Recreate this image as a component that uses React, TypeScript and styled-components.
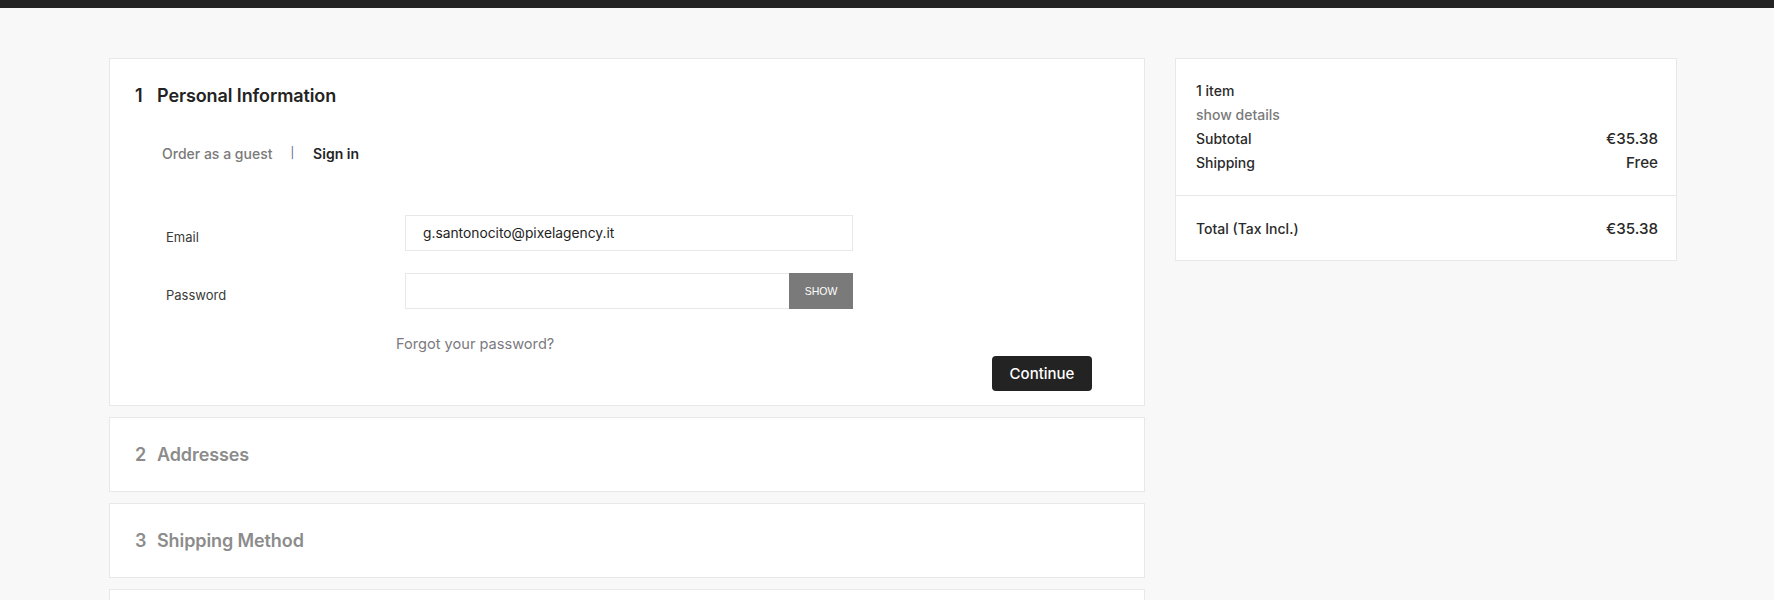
import React from "react";
import styled, { createGlobalStyle } from "styled-components";

const GlobalStyle = createGlobalStyle`
  * { box-sizing: border-box; }
  html, body { margin: 0; padding: 0; }
  body {
    background: #f8f8f8;
    font-family: "Inter", "Noto Sans", "Liberation Sans", sans-serif;
    color: #232323;
  }
`;

const Page = styled.div`
  min-height: 600px;
  background: #f8f8f8;
`;

const TopBar = styled.div`
  height: 8px;
  background: #232323;
`;

const Layout = styled.div`
  display: flex;
  align-items: flex-start;
  gap: 30px;
  padding: 50px 0 0 109px;
`;

const MainColumn = styled.div`
  width: 1036px;
  display: flex;
  flex-direction: column;
  gap: 11px;
`;

const StepCard = styled.section`
  background: #fff;
  border: 1px solid #e8e8e8;
  min-height: 75px;
`;

const StepHeader = styled.h2<{ $active?: boolean }>`
  margin: 0;
  height: 73px;
  padding: 0 25px;
  display: flex;
  align-items: center;
  font-size: 18px;
  font-weight: 600;
  letter-spacing: -0.1px;
  color: ${(p) => (p.$active ? "#232323" : "#8c8c8c")};
`;

const StepNumber = styled.span`
  display: inline-block;
  width: 22px;
`;

const StepBody = styled.div`
  padding: 0 52px 14px 52px;
`;

const Tabs = styled.div`
  display: flex;
  align-items: center;
  height: 24px;
  margin-top: 9px;
  font-size: 14px;
  font-weight: 500;
`;

const Tab = styled.span<{ $active?: boolean }>`
  color: ${(p) => (p.$active ? "#232323" : "#7a7a7a")};
  font-weight: ${(p) => (p.$active ? 600 : 500)};
`;

const TabSep = styled.span`
  color: #5a6090;
  font-size: 11px;
  font-weight: 400;
  margin: 0 19px 0 18px;
`;

const FormGrid = styled.div`
  display: grid;
  grid-template-columns: 239px 448px;
  row-gap: 22px;
  align-items: center;
  margin-top: 50px;
  padding-left: 4px;
`;

const Label = styled.label`
  font-size: 13px;
  color: #3a3a3a;
  padding-top: 8px;
`;

const Input = styled.div`
  height: 36px;
  border: 1px solid #e8e8e8;
  background: #fff;
  display: flex;
  align-items: center;
  padding-left: 17px;
  font-size: 13.8px;
  color: #232323;
`;

const PasswordGroup = styled.div`
  display: flex;
  height: 36px;
`;

const PasswordInput = styled.div`
  flex: 1;
  border: 1px solid #e8e8e8;
  border-right: none;
`;

const ShowButton = styled.button`
  width: 64px;
  border: none;
  background: #7a7a7a;
  color: #fff;
  font-family: "Liberation Sans", Arial, sans-serif;
  font-size: 10.5px;
  text-transform: uppercase;
  padding: 0;
`;

const ForgotRow = styled.div`
  margin-top: 23px;
  padding-left: 234px;
  height: 24px;
  display: flex;
  align-items: center;
`;

const ForgotLink = styled.a`
  font-size: 14.6px;
  color: #7a7a80;
  text-decoration: none;
`;

const ActionRow = styled.div`
  display: flex;
  justify-content: flex-end;
`;

const ContinueButton = styled.button`
  width: 100px;
  height: 35px;
  border: none;
  border-radius: 4px;
  background: #232323;
  color: #fff;
  font-family: "Inter", sans-serif;
  font-size: 15px;
  font-weight: 500;
`;

const Summary = styled.aside`
  width: 502px;
  background: #fff;
  border: 1px solid #e8e8e8;
`;

const SummarySection = styled.div<{ $divider?: boolean }>`
  padding: ${(p) => (p.$divider ? "20px 18px 20px 20px" : "19px 18px 21px 20px")};
  border-top: ${(p) => (p.$divider ? "1px solid #e8e8e8" : "none")};
`;

const SummaryLine = styled.div<{ $muted?: boolean }>`
  display: flex;
  justify-content: space-between;
  align-items: center;
  height: 24px;
  font-size: 14px;
  font-weight: 500;
  color: ${(p) => (p.$muted ? "#7a7a7a" : "#2a2a2a")};
`;

const Amount = styled.span`
  font-size: 15.2px;
  font-weight: 500;
`;

const steps = ["Addresses", "Shipping Method"];

export default function App() {
  return (
    <Page>
      <GlobalStyle />
      <TopBar />
      <Layout>
        <MainColumn>
          <StepCard>
            <StepHeader $active>
              <StepNumber>1</StepNumber>Personal Information
            </StepHeader>
            <StepBody>
              <Tabs>
                <Tab>Order as a guest</Tab>
                <TabSep>|</TabSep>
                <Tab $active>Sign in</Tab>
              </Tabs>
              <FormGrid>
                <Label>Email</Label>
                <Input>g.santonocito@pixelagency.it</Input>
                <Label>Password</Label>
                <PasswordGroup>
                  <PasswordInput />
                  <ShowButton>Show</ShowButton>
                </PasswordGroup>
              </FormGrid>
              <ForgotRow>
                <ForgotLink href="#">Forgot your password?</ForgotLink>
              </ForgotRow>
              <ActionRow>
                <ContinueButton>Continue</ContinueButton>
              </ActionRow>
            </StepBody>
          </StepCard>
          {steps.map((s, i) => (
            <StepCard key={s}>
              <StepHeader>
                <StepNumber>{i + 2}</StepNumber>
                {s}
              </StepHeader>
            </StepCard>
          ))}
          <StepCard aria-label="4 Payment" />
        </MainColumn>
        <Summary>
          <SummarySection>
            <SummaryLine>1 item</SummaryLine>
            <SummaryLine $muted>show details</SummaryLine>
            <SummaryLine>
              <span>Subtotal</span>
              <Amount>€35.38</Amount>
            </SummaryLine>
            <SummaryLine>
              <span>Shipping</span>
              <Amount>Free</Amount>
            </SummaryLine>
          </SummarySection>
          <SummarySection $divider>
            <SummaryLine>
              <span>Total (Tax Incl.)</span>
              <Amount>€35.38</Amount>
            </SummaryLine>
          </SummarySection>
        </Summary>
      </Layout>
    </Page>
  );
}
